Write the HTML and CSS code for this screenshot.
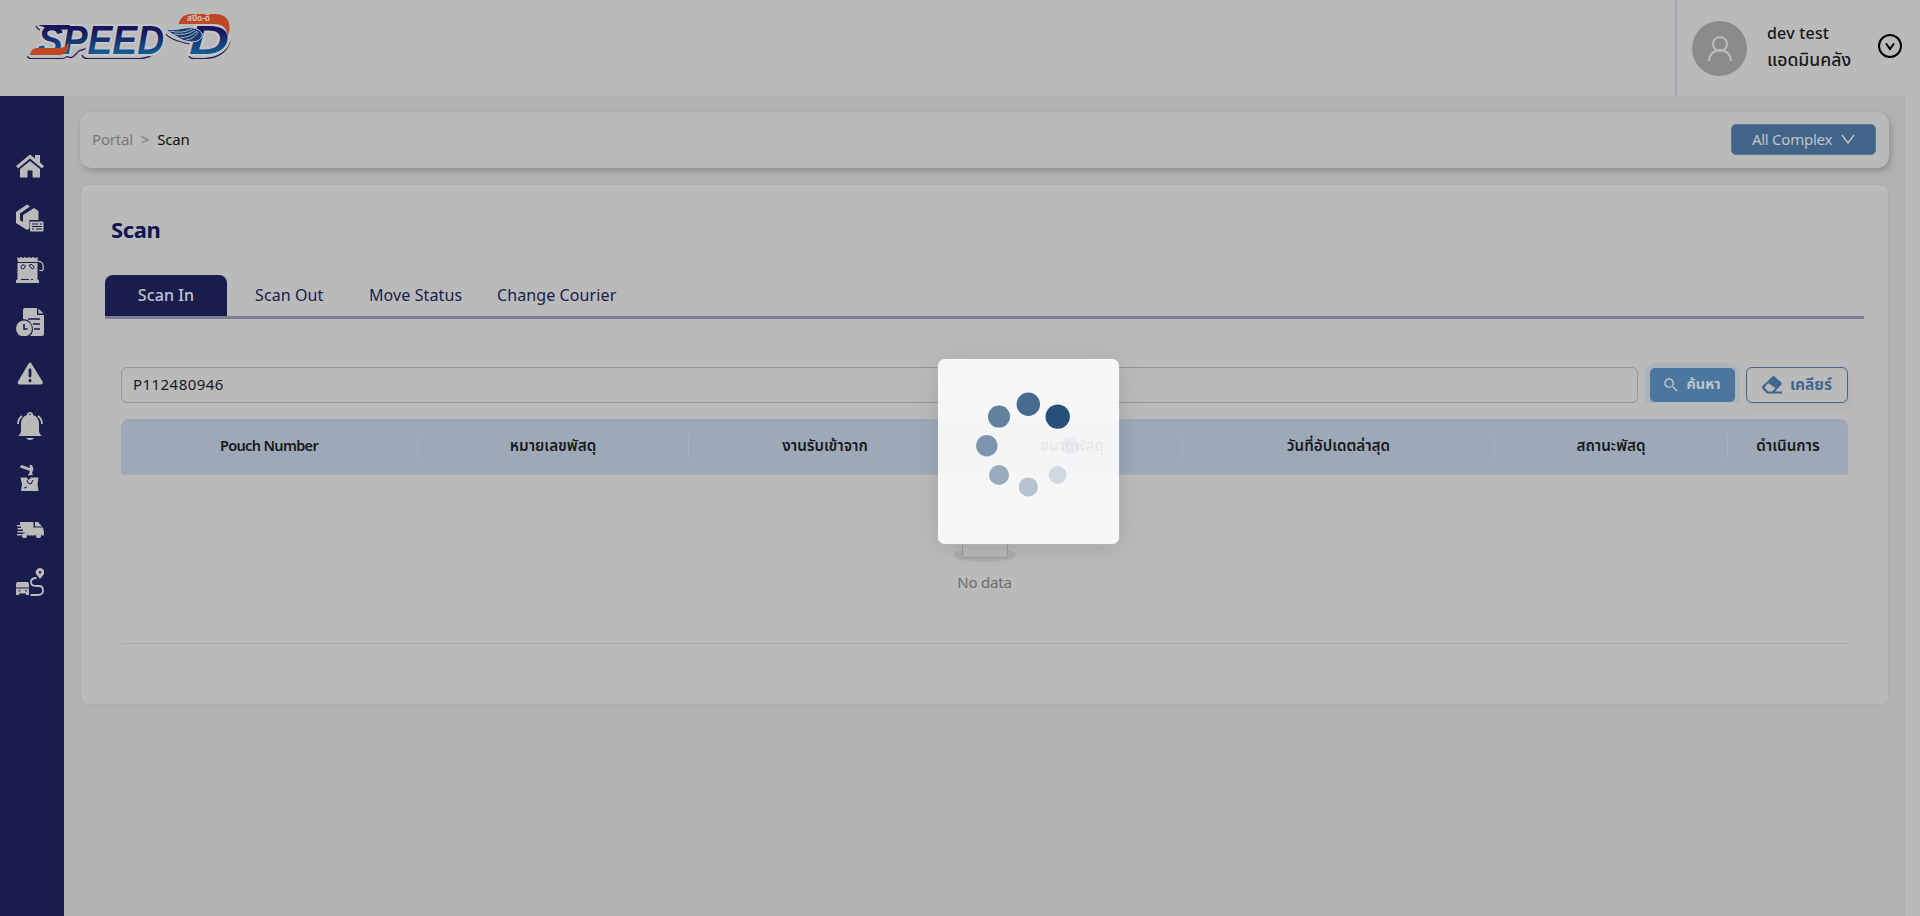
FILE: index.html
```html
<!DOCTYPE html>
<html lang="th">
<head>
<meta charset="utf-8">
<title>Speed-D Scan</title>
<link rel="stylesheet" href="styles.css">
</head>
<body>
<header class="header">
  <svg class="logo" width="240" height="70" viewBox="0 0 240 70">
    <defs>
      <linearGradient id="blue" gradientUnits="userSpaceOnUse" x1="0" y1="25" x2="0" y2="54"><stop offset=".2" stop-color="#17165a"/><stop offset="1" stop-color="#125f92"/></linearGradient>
    </defs>
    <path d="M27.500 56 q0 2.500 4 2.500 h30 q4 0 6-2.500 q2 3 6 .5 l6-6 q5-1 6-2 M82 55 q1 3.500 6 3.500 h52 q18-1 24-20 M36 26 q1 3 4 4 M166 34 q4 6 24 10 M189 56 q1 2.500 5 2.500 h11 q20-1 25-17" fill="none" stroke="#201d55" stroke-width="1.200"/>
    <g class="logo-word">
      <text x="38" y="54" textLength="126" lengthAdjust="spacingAndGlyphs">SPEED</text>
      <text x="189" y="54" textLength="40" lengthAdjust="spacingAndGlyphs">D</text>
    </g>
    <path d="M38 25 h32 l-2 4.500 H48 q-4-3-10-4.500z" fill="#17165a"/>
    <path d="M30 55 q1-7 7-7 h21 q8 0 11-6 q0 13-10 13z" fill="#bd4826"/>
    <path d="M178.500 24 q3-10 12-10 h24 q16 0 15 16 l-2 8 q0-14-13-14z" fill="#bd4826"/>
    <text class="logo-thai" x="187" y="21" textLength="23" lengthAdjust="spacingAndGlyphs">สปีด-ดี</text>
    <path d="M165.500 29 q10 1.500 19-1 q13-2 18 6 q-1 8-11 8 q-10-1-14-5 q-5-2-12-8z" fill="#173b72" stroke="#c1c7cf" stroke-width="1"/>
    <path d="M170 31 q12 3 22-2 m-18 5 q11 2 21-4 m-15 8 q11-1 17-7 m-11 9 q8-1 12-8" stroke="#b9c1ca" fill="none" stroke-width=".9"/>
  </svg>
  <div class="account">
    <span class="avatar"><svg width="28" height="28" viewBox="0 0 28 28"><circle cx="14" cy="9" r="7"/><path d="M3 26 a11 11 0 0 1 22 0"/></svg></span>
    <span class="names"><b class="name">dev test</b><b class="role">แอดมินคลัง</b></span>
    <svg class="toggle" width="26" height="26" viewBox="0 0 26 26"><circle cx="13" cy="13" r="11"/><path d="M9 10.500 L13 16 L17 10.500"/></svg>
  </div>
</header>
<div class="body">
  <nav class="sidebar">
    <svg class="ico" viewBox="0 0 28 28"><path d="M14 2.500 L19 6.500 V3 H24 V10.500 L28 14 26 16.500 14 6.500 2 16.500 0 14z M14 9 L24 17 V25.500 H16.500 V18.500 H11.500 V25.500 H4 V17z"/></svg>
    <svg class="ico" viewBox="0 0 28 28"><path d="M0 8 L11 .5 14 2.500 4 9.500 V16 L7 18 V11 L18 4 22.500 7 V16 H13.500 V24.500 L11 26 0 19z"/><rect x="14" y="17.500" width="13.500" height="10" rx="1"/><path class="cut" d="M16 20 h2 m2 0 h2 m2 0 h2 M16 22.500 h10 M16 25 h2 m2 0 h2 m2 0 h2 M19 19 v2 M23 24 v2"/></svg>
    <svg class="ico" viewBox="0 0 28 28"><path d="M1 1 L3 2 5 1 7 2 9 1 11 2 13 1 15 2 17 1 19 2 22 1 21 6 H2z M1.500 7 H21.500 L21.500 23 23 24.500 V27 H0 V24.500 L1.500 23z"/><path class="line thin" d="M21 5.500 q6-1 6.300 5.500 q.2 5-4 3"/><path class="cut" d="M5 12 q0-4 3.500-3 q1.500 0 0 3 q-2 2-3.500 0 M13 9 q3.500-2 5 2 q0 3-3 1z M5 23.500 h8 m2 0 h2"/></svg>
    <svg class="ico" viewBox="0 0 28 28"><path d="M9 0 H21 V7 H28 V26 Q28 28 26 28 H14 A10 10 0 0 0 7 11 V2 Q7 0 9 0z M22.500 .5 L27.500 5.500 H22.500z"/><circle cx="8" cy="20.500" r="8"/><path class="cut thick" d="M8 16 v5 h3.500 M12 11 h12 M17 16 h7 M18 21 h6"/></svg>
    <svg class="ico" viewBox="0 0 28 28"><path d="M14 2.500 q1 0 2 2 L26.500 21.500 q1 3-2 3 H4 q-3 0-2-3 L12 4.500 q1-2 2-2z"/><path class="cut heavy" d="M14 10 v6 M14 20.500 v.5"/></svg>
    <svg class="ico" viewBox="0 0 28 28"><path d="M14 0 q3 0 3 3 q6 2 6 9 v6 q0 4 3 6 H2 q3-2 3-6 v-6 q0-7 6-9 q0-3 3-3z M10 26 h8 q-1 2-4 2 t-4-2z"/><path class="line" d="M6 4 q-4 3-4 8 M22 4 q4 3 4 8"/><circle class="navy" cx="14" cy="2.500" r=".8"/></svg>
    <svg class="ico" viewBox="0 0 28 28"><path d="M4.500 2 L5.500 1 14 4 13.500 1 16 1 17.500 5 16 9 17 11 12 11.500 14 7 4 3.500z M4.500 13.500 H11 L12 16 15 14 14 13.500 H22.500 L21.500 20 22.500 27 H5 L6 20z"/><path class="cut" d="M8 24 l3-1 M11 16 l1 3 3 1 2-4"/></svg>
    <svg class="ico" viewBox="0 0 28 28"><path d="M4 6 H17.500 V11.500 H27 Q28 14 28 19.500 H26 A4 4 0 0 0 19 19.500 H12 A4 4 0 0 0 5 19.500 H1 V18 H9 V16.500 H1.500 V15 H7 V13.500 H1.500 V12 H5 V10.500 H1 V9 H4z M19 6 H22 L26 10.500 H19z"/><circle cx="8.500" cy="19.500" r="2.600"/><circle cx="22.500" cy="19.500" r="2.600"/></svg>
    <svg class="ico" viewBox="0 0 28 28"><path d="M1 14 H12 L13 16 V27 H10 V25.500 H3 V27 H0 V16z M24 0 a4.300 4.300 0 0 1 4 6 L24 11 20 6 a4.300 4.300 0 0 1 4-6z"/><path class="cut" d="M0 20 H13 M2.500 22.800 h2 M9 22.800 h2"/><circle class="navy" cx="24" cy="4.300" r="1.200"/><path class="line" d="M20.500 10 q-5.500 0-5.500 4 t5 4 h3 q4 0 4 4.500 t-5 4.500 H14.500"/></svg>
  </nav>
  <main class="main">
    <section class="crumbs">
      <span class="portal">Portal</span><span class="gt">&gt;</span><span class="here">Scan</span>
      <button class="complex"><span>All Complex</span><svg width="14" height="11" viewBox="0 0 14 11"><path d="M1 1 L7 9 L13 1"/></svg></button>
    </section>
    <section class="card">
      <h1 class="title">Scan</h1>
      <div class="tabs"><span class="tab active">Scan In</span><span class="tab out">Scan Out</span><span class="tab move">Move Status</span><span class="tab courier">Change Courier</span></div>
      <div class="search">
        <div class="field">P112480946</div>
        <button class="find"><svg width="14" height="14" viewBox="0 0 15 15"><circle cx="5.500" cy="5.500" r="4.500"/><path d="M9 9 L14 14"/></svg><span>ค้นหา</span></button>
        <button class="clear"><svg width="20" height="18" viewBox="0 0 20 18"><path d="M11 0 Q12 0 13 1 L19 6 Q20.500 8 19 9 L13 15.500 H20 V17.500 H5 L0.500 13 Q-.5 11 .5 10z M6 7 L2.500 11.500 6 15.500 H10 L13.500 12z" fill-rule="evenodd"/></svg><span>เคลียร์</span></button>
      </div>
      <div class="thead">
        <span class="th pouch">Pouch Number</span><span class="th">หมายเลขพัสดุ</span><span class="th">งานรับเข้าจาก</span><span class="th">ขนาดพัสดุ</span><span class="th">วันที่อัปเดตล่าสุด</span><span class="th">สถานะพัสดุ</span><span class="th">ดำเนินการ</span>
      </div>
      <div class="empty">
        <svg width="64" height="41" viewBox="0 0 64 41"><ellipse cx="32" cy="33" rx="31" ry="7" fill="#adadad"/><path d="M9.500 13 L19 1.500 H43 L54.500 13 V33 Q54.500 35.500 52 35.500 H12 Q9.500 35.500 9.500 33z M9.500 13 H21 Q23 13 23 16 T26 19 H38 Q41 19 41 16 T43 13 H54.500" fill="#b8b8b8" stroke="#9b9b9b"/></svg>
        <span>No data</span>
      </div>
    </section>
  </main>
</div>
<div class="loader">
  <svg width="181" height="185" viewBox="938 359 181 185"><circle cx="1028.300" cy="404.200" r="11.700" fill="#486a8e"/><circle cx="1057.700" cy="416.600" r="12.200" fill="#265078"/><circle cx="999" cy="416.600" r="11" fill="#63809d"/><circle cx="986.800" cy="445.800" r="10.700" fill="#7c94ae"/><circle cx="999" cy="475" r="10" fill="#99acbe"/><circle cx="1028.300" cy="487" r="9.600" fill="#b6c2d0"/><circle cx="1057.700" cy="475" r="9" fill="#d1d8e1"/><circle cx="1070" cy="445.800" r="8.500" fill="#d5d8e0" opacity=".3"/></svg>
</div>
</body>
</html>
```
FILE: styles.css
```css
* { box-sizing: border-box; }
body { margin: 0; width: 1920px; height: 916px; overflow: hidden; background: #bababa; font-family: "Noto Sans", "Noto Sans Thai", sans-serif; font-size: 16px; color: #17191b; display: flex; flex-direction: column; }
button { font: inherit; padding: 0; cursor: pointer; }
svg { flex: none; display: block; }
.header { height: 96px; display: flex; justify-content: space-between; }
.logo { width: 240px; height: 70px; }
.logo-word { font: italic 900 40.500px "Liberation Sans", sans-serif; fill: url(#blue); stroke: #c6c6ca; stroke-width: 4; stroke-linejoin: round; paint-order: stroke; }
.logo-thai { font-size: 8px; font-weight: 700; fill: #d8c0b5; }
.account { width: 245px; border-left: 2px solid #a6a6b0; display: flex; padding-left: 15px; }
.avatar { width: 55px; height: 55px; margin-top: 21px; border-radius: 50%; background: #8b8b8b; display: flex; align-items: center; justify-content: center; }
.avatar svg { fill: none; stroke: #bababa; stroke-width: 2; }
.names { width: 110px; margin: 19px 0 0 20px; display: flex; flex-direction: column; white-space: nowrap; }
.name, .role { font-weight: 500; line-height: 28px; height: 27px; }
.name { letter-spacing: .2px; }
.role { font-size: 17.600px; line-height: 27px; }
.toggle { margin: 33px 0 0 0; fill: none; stroke: #000; stroke-width: 2; }
.body { flex: 1; display: flex; }
.sidebar { width: 64px; background: #181d4d; padding: 56px 0 0 16px; display: flex; flex-direction: column; gap: 24px; }
.ico { width: 28px; height: 28px; fill: #bababa; }
.cut { fill: none; stroke: #181d4d; stroke-width: 1; }
.thick { stroke-width: 1.6; }
.heavy { stroke-width: 2.8; stroke-linecap: round; }
.line { fill: none; stroke: #bababa; stroke-width: 1.8; }
.thin { stroke-width: 1.3; }
.navy { fill: #181d4d; }
.main { width: 1841px; background: #b2b2b2; padding: 16px 16px 0; }
.crumbs { height: 56px; width: 1809px; padding: 0 13px 0 12px; border-radius: 12px; background: #bababa; box-shadow: 2px 3px 6px rgba(0,0,0,.2); display: flex; align-items: center; font-size: 15px; }
.portal, .gt, .here { padding-bottom: 2px; letter-spacing: -.2px; }
.portal, .gt { color: #777; }
.gt { margin: 0 8px; }
.here { color: #111; }
.complex { margin: 0 0 1px auto; width: 145px; height: 31px; border: 1px solid #587897; border-radius: 5px; background: #416488; color: #c0c4c9; display: flex; align-items: center; justify-content: center; gap: 9px; font-size: 15px; letter-spacing: -.25px; }
.complex span { padding-bottom: 1px; }
.complex svg { fill: none; stroke: #c0c4c9; stroke-width: 1.4; }
.card { width: 1807px; height: 519px; margin: 17px 0 0 1px; padding: 29px 24px 0; border-radius: 7px; background: #bababa; box-shadow: 0 0 2px rgba(0,0,0,.1); }
.title { height: 30px; line-height: 30px; margin: 0 0 0 6px; font-size: 22px; letter-spacing: -.4px; color: #0f1454; }
.tabs { margin-top: 31px; width: 1759px; height: 44px; border-bottom: 3px solid #7c7e92; display: flex; line-height: 40px; color: #181d4d; white-space: nowrap; letter-spacing: .1px; }
.active { width: 122px; text-align: center; border-radius: 8px 8px 0 0; background: #181d4d; color: #c3c3c9; font-weight: 500; }
.out { width: 115px; padding-left: 28px; }
.move { width: 127px; padding-left: 27px; }
.courier { padding-left: 28px; }
.search { height: 36px; margin: 48px 0 0 16px; width: 1727px; display: flex; }
.field { width: 1517px; border: 1px solid #94979b; border-radius: 6px; padding-left: 11px; line-height: 33px; font-size: 15px; letter-spacing: .45px; }
.find { width: 85px; height: 34px; margin: 1px 11px 0 12px; border: 0; border-radius: 5px; background: #4b769d; color: #bfc6cc; display: flex; align-items: center; justify-content: center; gap: 8px; font-size: 14.500px; font-weight: 700; box-shadow: 0 0 0 5px #acb4bb; clip-path: inset(-5px -5px -1px -5px); }
.find span { padding-bottom: 2px; }
.find svg { fill: none; stroke: #bfc6cc; stroke-width: 1.5; }
.clear { width: 102px; border: 1px solid #416790; border-radius: 6px; background: #bababa; color: #416790; display: flex; align-items: center; justify-content: center; gap: 8px; font-size: 15.500px; font-weight: 700; box-shadow: 4px 5px 10px rgba(0,0,0,.035); }
.clear svg { fill: #416790; }
.thead { width: 1727px; height: 56px; margin: 16px 0 0 16px; display: grid; grid-template-columns: 297px 271px 273px 221px 312px 233px 120px; align-items: center; border-radius: 8px 8px 0 0; border-bottom: 1px solid #adafb2; background: #9da9b9; font-size: 15.200px; font-weight: 600; text-align: center; white-space: nowrap; }
.th { height: 24px; line-height: 20px; border-right: 1px solid #adafb3; }
.th:last-child { border-right: 0; }
.pouch { font-size: 14.500px; letter-spacing: -.65px; }
.empty { width: 1727px; height: 169px; margin-left: 16px; padding: 47px 0 0 0; border-bottom: 1px solid #adadad; display: flex; flex-direction: column; align-items: center; font-size: 15px; letter-spacing: -.2px; color: #6d6d6d; }
.empty span { margin-top: 7px; line-height: 24px; }
.loader { position: absolute; left: 938px; top: 359px; width: 181px; height: 185px; border-radius: 7px; background: rgba(253,253,253,.91); box-shadow: 0 4px 24px rgba(0,0,0,.12), 0 0 1px #fff; }
```
